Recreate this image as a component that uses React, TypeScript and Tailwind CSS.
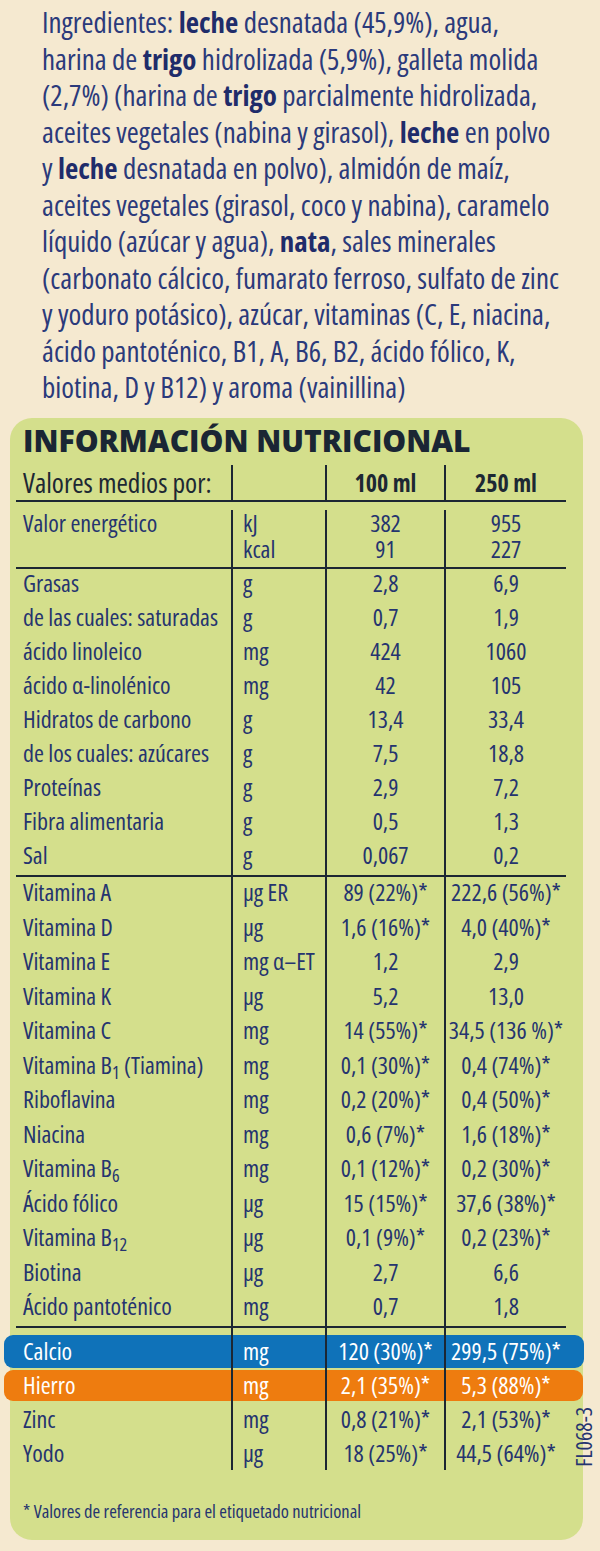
import React from "react";

type Row = [React.ReactNode, React.ReactNode, string, string];

const nutrition: Row[] = [
  ["Grasas", "g", "2,8", "6,9"],
  ["de las cuales: saturadas", "g", "0,7", "1,9"],
  ["ácido linoleico", "mg", "424", "1060"],
  ["ácido α-linolénico", "mg", "42", "105"],
  ["Hidratos de carbono", "g", "13,4", "33,4"],
  ["de los cuales: azúcares", "g", "7,5", "18,8"],
  ["Proteínas", "g", "2,9", "7,2"],
  ["Fibra alimentaria", "g", "0,5", "1,3"],
  ["Sal", "g", "0,067", "0,2"],
];

const Sub = ({ children }: { children: React.ReactNode }) => (
  <span className="relative top-[5px] text-[18px]">{children}</span>
);

const vitamins: Row[] = [
  ["Vitamina A", "µg ER", "89 (22%)*", "222,6 (56%)*"],
  ["Vitamina D", "µg", "1,6 (16%)*", "4,0 (40%)*"],
  ["Vitamina E", "mg α–ET", "1,2", "2,9"],
  ["Vitamina K", "µg", "5,2", "13,0"],
  ["Vitamina C", "mg", "14 (55%)*", "34,5 (136 %)*"],
  [<>Vitamina B<Sub>1</Sub> (Tiamina)</>, "mg", "0,1 (30%)*", "0,4 (74%)*"],
  ["Riboflavina", "mg", "0,2 (20%)*", "0,4 (50%)*"],
  ["Niacina", "mg", "0,6 (7%)*", "1,6 (18%)*"],
  [<>Vitamina B<Sub>6</Sub></>, "mg", "0,1 (12%)*", "0,2 (30%)*"],
  ["Ácido fólico", "µg", "15 (15%)*", "37,6 (38%)*"],
  [<>Vitamina B<Sub>12</Sub></>, "µg", "0,1 (9%)*", "0,2 (23%)*"],
  ["Biotina", "µg", "2,7", "6,6"],
  ["Ácido pantoténico", "mg", "0,7", "1,8"],
];

const minerals: { r: Row; bar?: string }[] = [
  { r: ["Calcio", "mg", "120 (30%)*", "299,5 (75%)*"], bar: "blue" },
  { r: ["Hierro", "mg", "2,1 (35%)*", "5,3 (88%)*"], bar: "orange" },
  { r: ["Zinc", "mg", "0,8 (21%)*", "2,1 (53%)*"] },
  { r: ["Yodo", "µg", "18 (25%)*", "44,5 (64%)*"] },
];

const grid = "grid grid-cols-[215px_94px_119px_122px]";
const cellB = "border-l-2 border-[#1c2733]";

function TRow({ r, h, lead, bar }: { r: Row; h: string; lead: string; bar?: string }) {
  const white = !!bar;
  return (
    <div className={`relative ${grid} ${h} ${lead} ${white ? "text-white" : ""}`}>
      {bar === "blue" && (
        <div className="absolute left-[-12px] right-[-18px] top-[1px] bottom-0 rounded-[9px] bg-[#0f72b9]" />
      )}
      {bar === "orange" && (
        <div className="absolute left-[-12px] right-[-17px] top-[2px] bottom-[1px] rounded-[9px] bg-[#ee7c0f]" />
      )}
      <div className="relative pl-[7px] whitespace-nowrap">{r[0]}</div>
      <div className={`relative ${cellB} pl-[10px] whitespace-nowrap`}>{r[1]}</div>
      <div className={`relative ${cellB} text-center whitespace-nowrap`}>{r[2]}</div>
      <div className={`relative ${cellB} text-center whitespace-nowrap`}>{r[3]}</div>
    </div>
  );
}

const Line = () => <div className="h-[2px] bg-[#1c2733]" />;

const B = ({ children }: { children: React.ReactNode }) => (
  <b className="font-bold text-[#1f2c6a]">{children}</b>
);

export default function App() {
  return (
    <div className="relative w-[600px] min-h-[1551px] overflow-hidden bg-[#f5e9d0] font-['Open_Sans',sans-serif] font-stretch-condensed">
      <div className="pl-[42px] pt-[4px] text-[29px] leading-[36.5px] font-[450] text-[#2b3a7b] whitespace-nowrap">
        <div>Ingredientes: <B>leche</B> desnatada (45,9%), agua,</div>
        <div>harina de <B>trigo</B> hidrolizada (5,9%), galleta molida</div>
        <div>(2,7%) (harina de <B>trigo</B> parcialmente hidrolizada,</div>
        <div>aceites vegetales (nabina y girasol), <B>leche</B> en polvo</div>
        <div>y <B>leche</B> desnatada en polvo), almidón de maíz,</div>
        <div>aceites vegetales (girasol, coco y nabina), caramelo</div>
        <div>líquido (azúcar y agua), <B>nata</B>, sales minerales</div>
        <div>(carbonato cálcico, fumarato ferroso, sulfato de zinc</div>
        <div>y yoduro potásico), azúcar, vitaminas (C, E, niacina,</div>
        <div>ácido pantoténico, B1, A, B6, B2, ácido fólico, K,</div>
        <div>biotina, D y B12) y aroma (vainillina)</div>
      </div>

      <div className="mt-[12.5px] ml-[10px] w-[573px] rounded-[22px] bg-[#d4df8c] pl-[6px] pt-[7px] pb-[17px]">
        <div className="pl-[7px] text-[30px] leading-[32px] font-extrabold font-stretch-normal text-[#1a2634]">
          INFORMACIÓN NUTRICIONAL
        </div>
        <div className="mt-[8px] w-[550px] text-[24px] font-medium text-[#25346f]">
          <div className={`${grid} h-[35px] leading-[35px] text-[#1d2833]`}>
            <div className="pl-[7px] text-[27.5px]">Valores medios por:</div>
            <div className={cellB}></div>
            <div className={`${cellB} text-center font-bold`}>100 ml</div>
            <div className={`${cellB} text-center font-bold`}>250 ml</div>
          </div>
          <Line />
          <div className={`${grid} h-[65px] pt-[8px] leading-[26px]`}>
            <div className="pl-[7px]">Valor energético</div>
            <div className={`${cellB} pl-[10px]`}>
              <div className="h-[26px]">kJ</div>
              <div className="h-[26px]">kcal</div>
            </div>
            <div className={`${cellB} text-center`}>
              <div className="h-[26px]">382</div>
              <div className="h-[26px]">91</div>
            </div>
            <div className={`${cellB} text-center`}>
              <div className="h-[26px]">955</div>
              <div className="h-[26px]">227</div>
            </div>
          </div>
          <Line />
          {nutrition.map((r, i) => (
            <TRow key={i} r={r} h="h-[34px]" lead="leading-[28px]" />
          ))}
          <Line />
          {vitamins.map((r, i) => (
            <TRow key={i} r={r} h="h-[34.5px]" lead="leading-[30px]" />
          ))}
          <Line />
          <div className={`${grid} h-[6px]`}>
            <div></div>
            <div className={cellB}></div>
            <div className={cellB}></div>
            <div className={cellB}></div>
          </div>
          {minerals.map((m, i) => (
            <TRow key={i} r={m.r} h="h-[34px]" lead="leading-[34px]" bar={m.bar} />
          ))}
        </div>
        <div className="mt-[29.5px] pl-[7px] text-[18.5px] leading-[24px] font-medium text-[#25346f]">
          * Valores de referencia para el etiquetado nutricional
        </div>
      </div>

      <div className="absolute left-[574px] top-[1407px] text-[22px] leading-[18px] font-medium text-[#25346f] [writing-mode:vertical-rl] rotate-180">
        FL068-3
      </div>
    </div>
  );
}
